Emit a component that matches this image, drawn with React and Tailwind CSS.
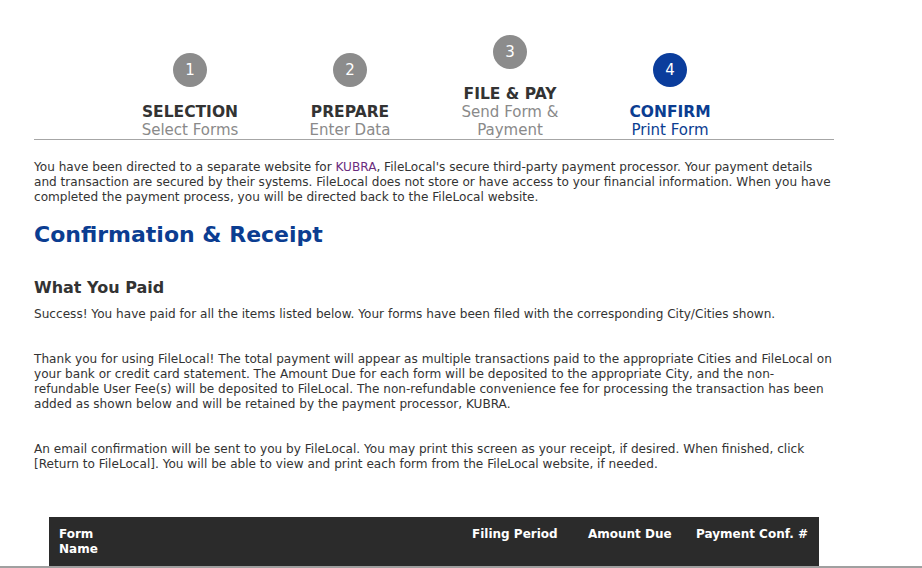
export default function App() {
  const steps = [
    { n: '1', title: 'SELECTION', sub: ['Select Forms'] },
    { n: '2', title: 'PREPARE', sub: ['Enter Data'] },
    { n: '3', title: 'FILE & PAY', sub: ['Send Form &', 'Payment'] },
    { n: '4', title: 'CONFIRM', sub: ['Print Form'], active: true },
  ]

  return (
    <div className="h-[568px] overflow-hidden bg-white font-['DejaVu_Sans',Verdana,sans-serif] text-[#333]">
      <div className="w-[800px] ml-[34px]">
        {/* Steps */}
        <div className="flex items-end pl-[76px] pt-[35px] border-b border-[#a6a6a6]">
          {steps.map(s => (
            <div key={s.n} className="w-[160px] flex flex-col items-center text-center leading-[18px]">
              <div className={`w-[34px] h-[34px] rounded-full flex items-center justify-center text-white text-[15px] mb-[16px] ${s.active ? 'bg-[#0b3d9c]' : 'bg-[#8c8c8c]'}`}>
                {s.n}
              </div>
              <div className={`font-bold text-[15.5px] ${s.active ? 'text-[#0b3d91]' : 'text-[#333]'}`}>{s.title}</div>
              {s.sub.map(t => (
                <div key={t} className={`text-[15px] ${s.active ? 'text-[#0b3d91]' : 'text-[#8a8a8a]'}`}>{t}</div>
              ))}
            </div>
          ))}
        </div>

        <p className="mt-[20px] text-[12.1px] leading-[15px]">
          You have been directed to a separate website for <span className="text-[#6b2c7e]">KUBRA</span>, FileLocal's secure third-party payment processor. Your payment details and transaction are secured by their systems. FileLocal does not store or have access to your financial information. When you have completed the payment process, you will be directed back to the FileLocal website.
        </p>

        <h1 className="mt-[15px] text-[22px] font-bold text-[#0b3d91] leading-[30px]">Confirmation &amp; Receipt</h1>

        <h2 className="mt-[28px] text-[16px] font-bold text-[#333] leading-[20px]">What You Paid</h2>

        <p className="mt-[9px] text-[12.1px] leading-[15px]">
          Success! You have paid for all the items listed below. Your forms have been filed with the corresponding City/Cities shown.
        </p>

        <p className="mt-[30px] text-[12.1px] leading-[15px]">
          Thank you for using FileLocal! The total payment will appear as multiple transactions paid to the appropriate Cities and FileLocal on your bank or credit card statement. The Amount Due for each form will be deposited to the appropriate City, and the non-refundable User Fee(s) will be deposited to FileLocal. The non-refundable convenience fee for processing the transaction has been added as shown below and will be retained by the payment processor, KUBRA.
        </p>

        <p className="mt-[30px] text-[12.1px] leading-[15px]">
          An email confirmation will be sent to you by FileLocal. You may print this screen as your receipt, if desired. When finished, click [Return to FileLocal]. You will be able to view and print each form from the FileLocal website, if needed.
        </p>

        <div className="mt-[45px] ml-[15px] w-[770px] h-[49px] bg-[#2b2b2b] flex text-white font-bold text-[12px] leading-[15px] pt-[10px]">
          <div className="w-[423px] pl-[10px]">Form<br />Name</div>
          <div className="w-[116px]">Filing Period</div>
          <div className="w-[108px]">Amount Due</div>
          <div>Payment Conf. #</div>
        </div>
      </div>
      <div className="h-[3px] bg-[#a0a0a0]" />
    </div>
  )
}
